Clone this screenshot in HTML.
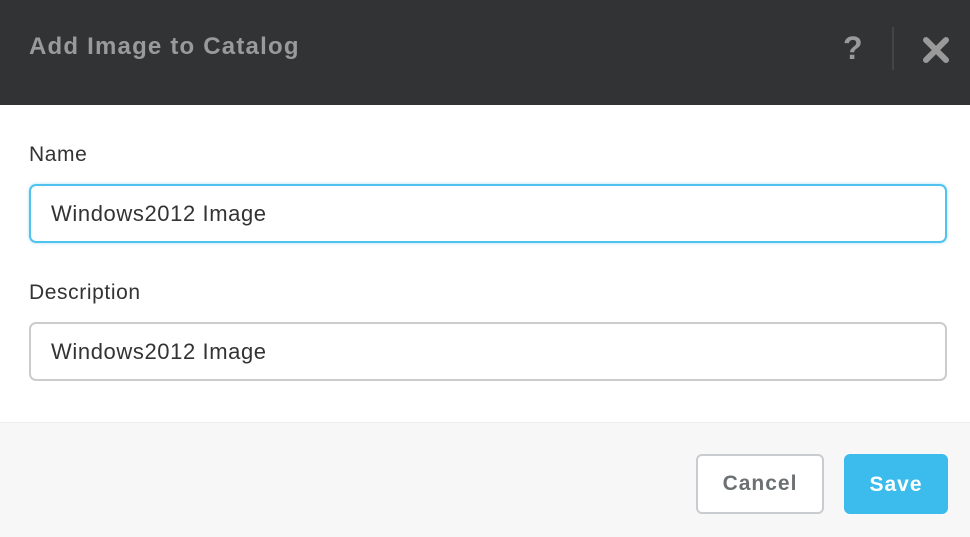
<!DOCTYPE html>
<html><head><style>
body{margin:0;width:970px;height:536px;overflow:hidden;font-family:"Liberation Sans",sans-serif;background:#fff;position:relative}
.hd{position:absolute;left:0;top:0;width:970px;height:105px;background:#323335}
.t{position:absolute;left:29px;top:33px;font-size:24px;font-weight:bold;color:#9a9a9a;letter-spacing:1.2px}
.q{position:absolute;left:843px;top:30px;font-size:32px;font-weight:bold;color:#9a9a9a}
.sep{position:absolute;left:892px;top:27px;width:2px;height:43px;background:#444}
.lbl{position:absolute;left:29px;font-size:21px;color:#333;letter-spacing:0.6px}
.in{position:absolute;left:29px;width:918px;box-sizing:border-box;height:59px;border:2px solid #ccc;border-radius:7px;font-size:22px;letter-spacing:0.6px;color:#333;padding:15px 20px;}
.ft{position:absolute;left:0;top:422px;width:970px;height:114px;background:#f7f7f7;border-top:1px solid #eee}
.b{position:absolute;top:454px;height:60px;box-sizing:border-box;border-radius:6px;font-size:21px;font-weight:bold;text-align:center;letter-spacing:1px}
</style></head><body>
<div class="hd">
<div class="t">Add Image to Catalog</div>
<div class="q">?</div>
<div class="sep"></div>
<svg style="position:absolute;left:922px;top:36px" width="28" height="28"><path d="M4 4L24 24M24 4L4 24" stroke="#9a9a9a" stroke-width="6" stroke-linecap="round"/></svg>
</div>
<div class="lbl" style="top:143px">Name</div>
<div class="in" style="top:184px;border-color:#4fc3ee;box-shadow:0 0 3px #a8dff5">Windows2012 Image</div>
<div class="lbl" style="top:281px">Description</div>
<div class="in" style="top:322px">Windows2012 Image</div>
<div class="ft"></div>
<div class="b" style="left:696px;width:128px;background:#fff;border:2px solid #c9ccd0;color:#6b7073;line-height:56px">Cancel</div>
<div class="b" style="left:844px;width:104px;background:#3bbcec;color:#fff;line-height:60px;padding-top:1px">Save</div>
</body></html>
